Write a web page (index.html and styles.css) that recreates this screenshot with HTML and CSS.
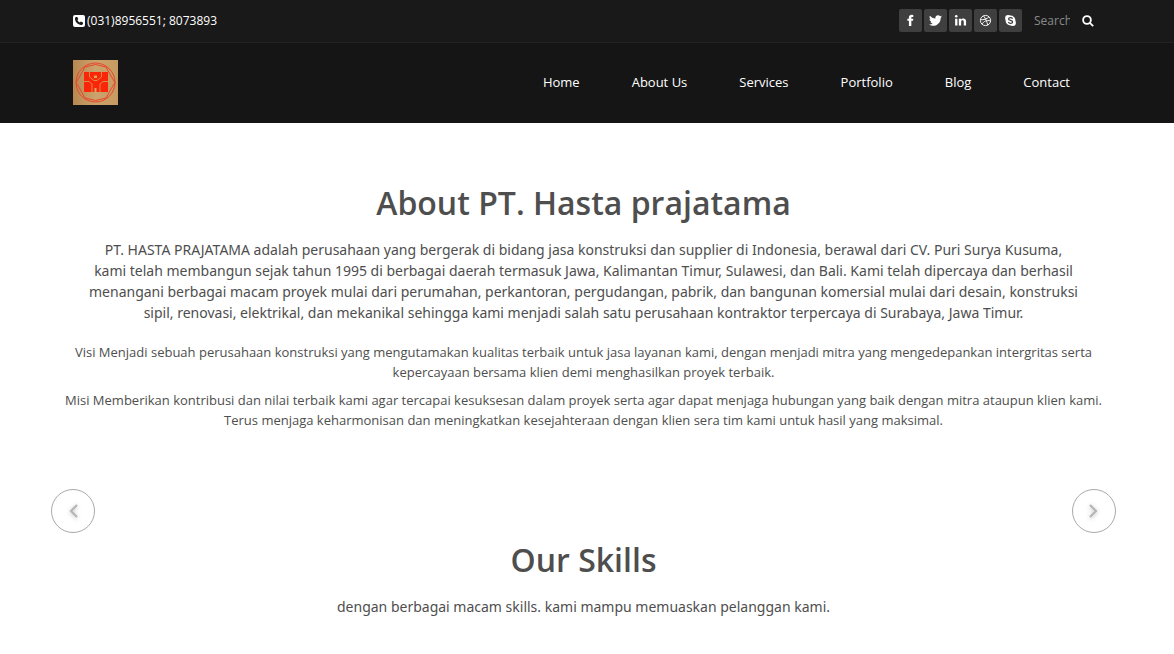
FILE: index.html
```html
<!DOCTYPE html>
<html lang="id">
<head>
<meta charset="utf-8">
<meta name="viewport" content="width=device-width, initial-scale=1">
<title>PT. Hasta Prajatama</title>
<link rel="stylesheet" href="styles.css">
</head>
<body>
<header class="header">
  <div class="topbar wrap">
    <p class="phone">
      <svg class="phone-icon" viewBox="0 0 12 12" aria-hidden="true"><rect width="12" height="12" rx="2" fill="#fff"/><path d="M3 2.100 4.300 2l1 2.100-.9.9c.5 1.200 1.200 1.900 2.500 2.500l.9-.9 2.200 1v.9c-.3 1-1.100 1.500-2 1.500C5 9.700 2.200 7 2 4c0-.8.2-1.500 1-1.900z" fill="#191919"/></svg>
      <span>(031)8956551; 8073893</span>
    </p>
    <div class="tools">
      <ul class="social">
        <li><a href="#" aria-label="Facebook"><svg viewBox="0 0 14 14"><path d="M10 1v2.100H8.800c-.8 0-.9.4-.9.9v1.200H10l-.3 2.200H7.900V13H5.300V7.400H3.600V5.200h1.700V3.700C5.300 1.900 6.500.9 8.200.9z"/></svg></a></li>
        <li><a href="#" aria-label="Twitter"><svg viewBox="0 0 512 512"><path d="M459.370 151.716c.325 4.548.325 9.097.325 13.645 0 138.720-105.583 298.558-298.558 298.558-59.452 0-114.680-17.219-161.137-47.106 8.447.974 16.568 1.299 25.340 1.299 49.055 0 94.213-16.568 130.274-44.832-46.132-.975-84.792-31.188-98.112-72.772 6.498.974 12.995 1.624 19.818 1.624 9.421 0 18.843-1.300 27.614-3.573-48.081-9.747-84.143-51.980-84.143-102.985v-1.299c13.969 7.797 30.214 12.670 47.431 13.319-28.264-18.843-46.781-51.005-46.781-87.391 0-19.492 5.197-37.360 14.294-52.954 51.655 63.675 129.300 105.258 216.365 109.807-1.624-7.797-2.599-15.918-2.599-24.040 0-57.828 46.782-104.934 104.934-104.934 30.213 0 57.502 12.670 76.670 33.137 23.715-4.548 46.456-13.320 66.599-25.340-7.798 24.366-24.366 44.833-46.132 57.827 21.117-2.273 41.584-8.122 60.426-16.243-14.292 20.791-32.161 39.308-52.628 54.253z"/></svg></a></li>
        <li><a href="#" aria-label="LinkedIn"><svg viewBox="0 0 14 14"><circle cx="2.400" cy="2.500" r="1.400"/><path d="M1.200 5h2.500v7.500H1.200zM5.200 5h2.500v1.100C8.100 5.400 8.900 4.800 10 4.800c2 0 3 1.300 3 3.400v4.300h-2.500v-4c0-1-.4-1.700-1.300-1.700-1 0-1.500.7-1.500 1.700v4H5.200z"/></svg></a></li>
        <li><a href="#" aria-label="Dribbble"><svg viewBox="0 0 14 14"><g fill="none" stroke="#fff" stroke-width="1"><circle cx="7" cy="7" r="5.500"/><path d="M4.800 2c2.300 2.900 3.900 6.300 4.500 9.900M1.600 6.200c3.700.1 7-.7 9.200-3.300M3.200 11c1.800-3.300 5-4.600 9.200-3.600"/></g></svg></a></li>
        <li><a href="#" aria-label="Skype"><svg viewBox="0 0 14 14"><circle cx="4.400" cy="4.400" r="3.200"/><circle cx="9.600" cy="9.600" r="3.200"/><circle cx="7" cy="7" r="5.300"/><path d="M9.200 5.100C8.800 4.300 8.100 4 7 4c-1.200 0-2.100.5-2.100 1.400C4.900 7.300 9.300 6.400 9.300 8.500 9.300 9.500 8.300 10 7.100 10c-1.300 0-2.100-.5-2.400-1.400" fill="none" stroke="#3f3f3f" stroke-width="1.300"/></svg></a></li>
      </ul>
      <form class="search" role="search">
        <input class="search-input" type="text" placeholder="Search" aria-label="Search">
        <button class="search-button" type="button" aria-label="Submit search"><svg viewBox="0 0 13 13" fill="none" stroke="#fff" stroke-width="2"><circle cx="5.400" cy="5.400" r="4.200"/><path d="m8.500 8.500 3.600 3.600"/></svg></button>
      </form>
    </div>
  </div>
  <div class="mainbar">
    <div class="mainbar-inner wrap">
      <a class="logo" href="#" aria-label="PT. Hasta Prajatama">
        <svg viewBox="0 0 45 45">
          <defs><linearGradient id="gold"><stop stop-color="#b98752"/><stop offset=".5" stop-color="#cba36c"/><stop offset="1" stop-color="#c69b62"/></linearGradient></defs>
          <rect width="45" height="45" fill="url(#gold)"/>
          <g fill="none" stroke="#ea452b" stroke-width="1">
            <circle cx="22.500" cy="22.500" r="19.500"/>
            <path d="M22.500 4.500 33 7 38 16l4 6.500-4 6.500-5 9-10.500 2.500L12 38l-5-9-4-6.500L7 16l5-9z"/>
          </g>
          <path d="M11 12h24v20H11z" fill="#fb2509"/>
          <g fill="none" stroke="#dc8a48" stroke-width="1">
            <path d="M16.500 12v5l4.500 3.500h3l4.500-3.500v-5M11 21.500h5l3 2.500v8M35 21.500h-5l-3 2.500v8"/>
          </g>
          <path d="M21 15.500h3V18h-3zM21.500 28h2v4h-2z" fill="#dfa45e"/>
        </svg>
      </a>
      <nav class="nav" aria-label="Main">
        <a href="#">Home</a><a href="#">About Us</a><a href="#">Services</a><a href="#">Portfolio</a><a href="#">Blog</a><a href="#">Contact</a>
      </nav>
    </div>
  </div>
</header>
<main class="wrap">
  <section class="about">
    <h2 class="title">About PT. Hasta prajatama</h2>
    <p class="lead">PT. HASTA PRAJATAMA adalah perusahaan yang bergerak di bidang jasa konstruksi dan supplier di Indonesia, berawal dari CV. Puri Surya Kusuma, kami&nbsp;telah membangun sejak tahun 1995 di berbagai daerah termasuk Jawa, Kalimantan Timur, Sulawesi, dan Bali. Kami telah dipercaya dan berhasil menangani berbagai macam proyek mulai dari perumahan, perkantoran, pergudangan, pabrik, dan bangunan komersial mulai dari desain, konstruksi sipil, renovasi, elektrikal, dan mekanikal sehingga kami menjadi salah satu perusahaan kontraktor terpercaya di Surabaya, Jawa Timur.</p>
    <p class="text">Visi Menjadi sebuah perusahaan konstruksi yang mengutamakan kualitas terbaik untuk jasa layanan kami, dengan menjadi mitra yang mengedepankan intergritas serta kepercayaan bersama klien demi menghasilkan proyek terbaik.</p>
    <p class="text">Misi Memberikan kontribusi dan nilai terbaik kami agar tercapai kesuksesan dalam proyek serta agar dapat menjaga hubungan yang baik dengan mitra ataupun klien kami. Terus menjaga keharmonisan dan meningkatkan kesejahteraan dengan klien sera tim kami untuk hasil yang maksimal.</p>
  </section>
  <div class="slider">
    <button class="arrow" type="button" aria-label="Previous"><svg viewBox="0 0 14 18"><path d="m11 3-6 6 6 6"/></svg></button>
    <button class="arrow" type="button" aria-label="Next"><svg viewBox="0 0 14 18"><path d="m3 3 6 6-6 6"/></svg></button>
  </div>
  <section class="skills">
    <h2 class="title">Our Skills</h2>
    <p class="lead">dengan berbagai macam skills. kami mampu memuaskan pelanggan kami.</p>
  </section>
</main>
</body>
</html>
```
FILE: styles.css
```css
* {
  box-sizing: border-box;
}

body {
  margin: 0;
  background: #fff;
  color: #4e4e4e;
  font-family: "Open Sans", "Liberation Sans", sans-serif;
  font-size: 13px;
  line-height: 20px;
}

h2, p, ul {
  margin: 0;
  padding: 0;
}

a {
  color: #fff;
  text-decoration: none;
}

button {
  padding: 0;
  background: none;
  border: 0;
  cursor: pointer;
}

svg {
  display: block;
}

.wrap {
  padding-right: 80px;
  padding-left: 73px;
}

.header {
  background: #191919;
  color: #fff;
}

.topbar {
  display: flex;
  align-items: center;
  justify-content: space-between;
  height: 42px;
  padding-bottom: 1px;
}

.phone {
  display: flex;
  align-items: center;
  gap: 2px;
  font-size: 12px;
}

.phone-icon {
  width: 12px;
  height: 12px;
}

.tools,
.social,
.search {
  display: flex;
  align-items: center;
}

.tools {
  gap: 12px;
}

.social {
  gap: 2px;
  list-style: none;
}

.social a {
  display: grid;
  place-items: center;
  width: 23px;
  height: 23px;
  border-radius: 2px;
  background: #3f3f3f;
}

.social svg {
  width: 13px;
  height: 13px;
  fill: #fff;
}

.search {
  gap: 12px;
}

.search-input {
  width: 36px;
  padding: 0;
  border: 0;
  outline: 0;
  background: transparent;
  color: #fff;
  font: inherit;
  font-size: 12px;
}

.search-input::placeholder {
  color: #8a8a8a;
}

.search-button svg {
  width: 12px;
  height: 12px;
}

.mainbar {
  padding-bottom: 2px;
  border-top: 1px solid #222;
  background: #151515;
}

.mainbar-inner {
  display: flex;
  align-items: center;
  justify-content: space-between;
  height: 78px;
}

.logo svg {
  width: 45px;
  height: 45px;
}

.nav {
  display: flex;
  gap: 52px;
  padding-right: 24px;
}

.title {
  font-size: 32px;
  font-weight: 600;
  line-height: 40px;
}

.about {
  padding-top: 60px;
  text-align: center;
}

.lead {
  padding: 0 14px;
  margin-top: 16px;
  font-family: "Noto Sans", "Open Sans", sans-serif;
  font-size: 14px;
  line-height: 21px;
}

.lead + .text {
  margin-top: 19px;
}

.text {
  margin: 8px -10px 0;
}

.slider {
  display: flex;
  justify-content: space-between;
  margin: 59px -22px 0;
}

.arrow {
  display: grid;
  place-items: center;
  width: 44px;
  height: 44px;
  border: 1px solid #aaa;
  border-radius: 50%;
}

.arrow svg {
  width: 14px;
  height: 18px;
  fill: none;
  stroke: #b4b4b4;
  stroke-width: 2;
  filter: drop-shadow(0 1px 2px #bbb);
}

.skills {
  padding-top: 7px;
  padding-bottom: 37px;
  text-align: center;
}
```
